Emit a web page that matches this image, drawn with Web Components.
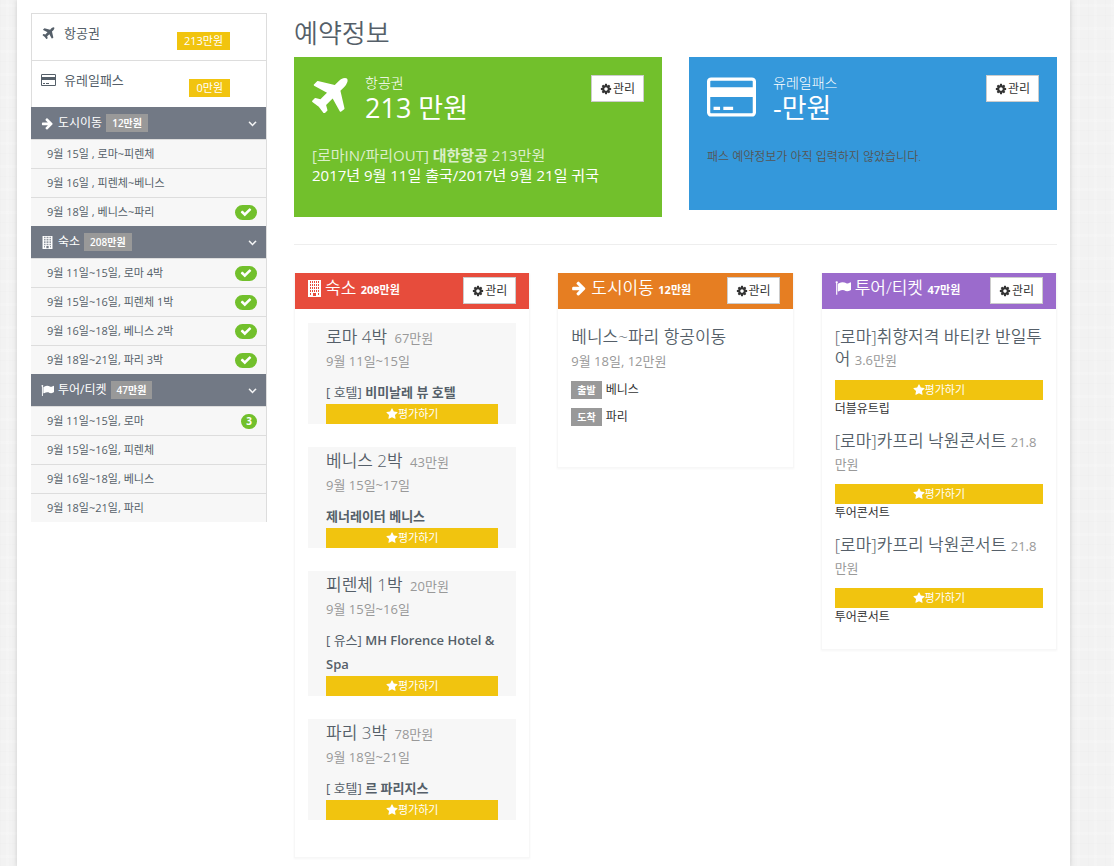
<!DOCTYPE html>
<html lang="ko">
<head>
<meta charset="utf-8">
<meta name="viewport" content="width=device-width, initial-scale=1">
<title>예약정보</title>
<style>
  :root {
    --ink: #555f69;
    --muted: #999;
    --green: #72c02c;
    --blue: #3498db;
    --red: #e74c3c;
    --orange: #e67e22;
    --purple: #9b6bcc;
    --yellow: #f1c40f;
    --slate: #727985;
    --line: #ddd;
  }

  body {
    margin: 0;
    font-family: "Open Sans", "Noto Sans CJK KR", sans-serif;
    font-size: 12px;
    line-height: 20px;
    color: var(--ink);
    background-color: #f2f2f2;
    background-image:
      repeating-linear-gradient(90deg, rgba(0, 0, 0, .008) 0 1px, transparent 1px 6px, rgba(255, 255, 255, .15) 6px 9px, transparent 9px 17px),
      repeating-linear-gradient(0deg, rgba(0, 0, 0, .008) 0 1px, transparent 1px 9px, rgba(255, 255, 255, .15) 9px 12px, transparent 12px 23px);
  }
</style>
</head>
<body>
<booking-page></booking-page>

<script>
(function () {
  // name: [viewBox, path]
  const ICONS = {
    plane: ["190 100 1420 1420", "M1568 160q44 52 12 148t-108 172l-161 161 160 696q5 19-12 33l-128 96q-7 6-19 6-4 0-7-1-15-3-21-16l-279-508-259 259 53 194q5 17-8 31l-96 96q-9 9-23 9h-2q-15-2-24-13l-189-252-252-189q-11-7-13-23-1-13 9-25l96-97q9-9 23-9 6 0 8 1l194 53 259-259-508-279q-14-8-17-24-2-16 9-27l128-128q14-13 30-8l665 159 160-160q76-76 172-108t148 12z"],
    card: ["0 128 1920 1536", "M1760 128q66 0 113 47t47 113v1216q0 66-47 113t-113 47h-1600q-66 0-113-47t-47-113v-1216q0-66 47-113t113-47h1600zm-1600 128q-13 0-22.5 9.5t-9.5 22.5v224h1664v-224q0-13-9.5-22.5t-22.5-9.5h-1600zm1600 1280q13 0 22.5-9.5t9.5-22.5v-608h-1664v608q0 13 9.5 22.5t22.5 9.5h1600zm-1504-128v-128h256v128h-256zm384 0v-128h384v128h-384z"],
    arrow: ["0 0 1792 1792", "M1600 960q0 54-37 91l-651 651q-39 37-91 37-51 0-90-37l-75-75q-38-38-38-91t38-91l293-293h-704q-52 0-84.5-37.5t-32.5-90.5v-128q0-53 32.5-90.5t84.5-37.5h704l-293-294q-38-36-38-90t38-90l75-75q38-38 90-38 53 0 91 38l651 651q37 35 37 90z"],
    building: ["0 0 13 17", "M0 0h13v17H0zM2 1v2h1V1zM4 1v2h1V1zM6 1v2h1V1zM8 1v2h1V1zM10 1v2h1V1zM2 4v2h1V4zM4 4v2h1V4zM6 4v2h1V4zM8 4v2h1V4zM10 4v2h1V4zM2 7v2h1V7zM4 7v2h1V7zM6 7v2h1V7zM8 7v2h1V7zM10 7v2h1V7zM2 10v2h1v-2zM4 10v2h1v-2zM6 10v2h1v-2zM8 10v2h1v-2zM10 10v2h1v-2zM2 13v2h1v-2zM5 13v3h3v-3zM10 13v2h1v-2z"],
    flag: ["0 0 1792 1792", "M320 256q0 72-64 110v1266q0 13-9.5 22.5t-22.5 9.5h-64q-13 0-22.5-9.5t-9.5-22.5v-1266q-64-38-64-110 0-53 37.5-90.5t90.5-37.5 90.5 37.5 37.5 90.5zm1472 64v763q0 25-12.5 38.5t-39.5 27.5q-215 116-369 116-61 0-123.5-22t-108.5-48-115.5-48-142.5-22q-192 0-464 146-17 9-33 9-26 0-45-19t-19-45v-742q0-32 31-55 21-14 79-43 236-120 421-120 107 0 200 29t219 88q38 19 88 19 54 0 117.5-21t110-47 88-47 54.5-21q26 0 45 19t19 45z"],
    cog: ["0 0 1792 1792", "M1152 896q0-106-75-181t-181-75-181 75-75 181 75 181 181 75 181-75 75-181zm512-109v222q0 12-8 23t-20 13l-185 28q-19 54-39 91 35 50 107 138 10 12 10 25t-9 23q-27 37-99 108t-94 71q-12 0-26-9l-138-108q-44 23-91 38-16 136-29 186-7 28-36 28h-222q-14 0-24.5-8.5t-11.5-21.5l-28-184q-49-16-90-37l-141 107q-10 9-25 9-14 0-25-11-126-114-165-168-7-10-7-23 0-12 8-23 15-21 51-66.5t54-70.5q-27-50-41-99l-183-27q-13-2-21-12.5t-8-23.5v-222q0-12 8-23t19-13l186-28q14-46 39-92-40-57-107-138-10-12-10-24 0-10 9-23 26-36 98.5-107.5t94.5-71.5q13 0 26 10l138 107q44-23 91-38 16-136 29-186 7-28 36-28h222q14 0 24.5 8.5t11.5 21.5l28 184q49 16 90 37l142-107q9-9 24-9 13 0 25 10 129 119 165 170 7 8 7 22 0 12-8 23-15 21-51 66.5t-54 70.5q26 50 41 98l183 28q13 2 21 12.5t8 23.5z"],
    star: ["0 0 1792 1792", "M1728 647q0 22-26 48l-363 354 86 500q1 7 1 20 0 21-10.5 35.5t-30.5 14.5q-19 0-40-12l-449-236-449 236q-22 12-40 12-21 0-31.5-14.5t-10.5-35.5q0-6 2-20l86-500-364-354q-25-27-25-48 0-37 56-46l502-73 225-455q19-41 49-41t49 41l225 455 502 73q56 9 56 46z"],
    check: ["0 0 1792 1792", "M1671 566q0 40-28 68l-724 724-136 136q-28 28-68 28t-68-28l-136-136-362-362q-28-28-28-68t28-68l136-136q28-28 68-28t68 28l294 295 656-657q28-28 68-28t68 28l136 136q28 28 28 68z"],
    down: ["0 0 1792 1792", "M1395 736q0 13-10 23l-466 466q-10 10-23 10t-23-10l-466-466q-10-10-10-23t10-23l50-50q10-10 23-10t23 10l393 393 393-393q10-10 23-10t23 10l50 50q10 10 10 23z"]
  };

  function define(name, html) {
    const template = document.createElement("template");
    template.innerHTML = html;

    window.customElements.define(name, class extends HTMLElement {
      constructor() {
        super();
        this.attachShadow({ mode: "open" });
        this.shadowRoot.appendChild(template.content.cloneNode(true));
      }
    });
  }

  class FaIcon extends HTMLElement {
    constructor() {
      super();
      this.attachShadow({ mode: "open" });
    }

    connectedCallback() {
      const [box, path] = ICONS[this.getAttribute("name")];
      this.shadowRoot.innerHTML = `
        <style>
          :host { display: inline-block; width: 14px; height: 14px; flex: none; }
          :host([name="down"]) path { stroke: currentColor; stroke-width: 70; }
          svg { display: block; width: 100%; height: 100%; }
        </style>
        <svg viewBox="${box}" fill="currentColor" fill-rule="evenodd" aria-hidden="true"><path d="${path}"/></svg>
      `;
    }
  }
  window.customElements.define("fa-icon", FaIcon);

  define("manage-button", `
    <style>
      :host { display: block; flex: none; }
      button {
        display: flex;
        align-items: center;
        gap: 1px;
        height: 27px;
        padding: 0 8px;
        border: 1px solid #ccc;
        background: #fff;
        color: #333;
        font: inherit;
        font-size: 12px;
        font-weight: 400;
        line-height: 18px;
        cursor: pointer;
      }
      fa-icon { width: 12px; height: 12px; }
    </style>
    <button type="button"><fa-icon name="cog"></fa-icon>관리</button>
  `);

  define("rate-button", `
    <style>
      :host { display: block; }
      button {
        display: flex;
        align-items: center;
        justify-content: center;
        width: 100%;
        height: 20px;
        padding: 0;
        border: 0;
        background: var(--yellow);
        color: #fff;
        font: inherit;
        font-size: 11px;
        line-height: 20px;
        cursor: pointer;
      }
      fa-icon { width: 12px; height: 12px; }
    </style>
    <button type="button"><fa-icon name="star"></fa-icon>평가하기</button>
  `);

  // Square price tag, grey unless --tag is set
  define("price-tag", `
    <style>
      :host {
        display: inline-block;
        padding: 0 6px;
        background: var(--tag, var(--muted));
        color: #fff;
        font-size: 10px;
        font-weight: 600;
        line-height: 18px;
      }
    </style>
    <slot></slot>
  `);

  // Top level sidebar link with a price
  define("nav-item", `
    <style>
      :host { display: block; border: 1px solid var(--line); border-bottom: 0; background: #fff; }
      a {
        display: flex;
        height: 46px;
        padding: 0 36px 0 9px;
        color: inherit;
        font-size: 13px;
        text-decoration: none;
      }
      ::slotted(fa-icon) { width: 15px; height: 12px; margin-top: 13px; }
      .text { flex: 1; margin: 9px 0 0 8px; }
      price-tag { --tag: var(--yellow); align-self: flex-start; margin-top: 18px; }
      .price { padding: 0 1px; font-size: 11px; font-weight: 400; }
    </style>
    <a href="#"><slot name="icon"></slot><span class="text"><slot></slot></span>
      <price-tag><span class="price"><slot name="price"></slot></span></price-tag></a>
  `);

  define("nav-group", `
    <style>
      :host { display: block; border-right: 1px solid var(--line); }
      button {
        display: flex;
        align-items: center;
        gap: 4px;
        width: 100%;
        height: 32px;
        padding: 0 7px 0 10px;
        border: 0;
        background: var(--slate);
        color: #fff;
        font: inherit;
        font-size: 12px;
        cursor: pointer;
      }
      .arrow { margin-left: auto; width: 13px; height: 13px; }
    </style>
    <button type="button" aria-expanded="true"><slot name="icon"></slot><slot name="title"></slot><price-tag><slot name="price"></slot></price-tag><fa-icon class="arrow" name="down"></fa-icon></button>
    <slot></slot>
  `);

  define("nav-row", `
    <style>
      :host { display: block; border-top: 1px solid var(--line); background: #f7f7f7; }
      a {
        display: flex;
        align-items: center;
        justify-content: space-between;
        height: 28px;
        padding: 0 9px 0 16px;
        color: inherit;
        font-size: 11px;
        text-decoration: none;
      }
      ::slotted([slot="badge"]) {
        display: flex;
        align-items: center;
        height: 15px;
        padding: 0 5px;
        border-radius: 8px;
        background: var(--green);
        color: #fff;
        font-size: 10px;
        font-weight: 700;
      }
    </style>
    <a href="#"><span><slot></slot></span><slot name="badge"></slot></a>
  `);

  define("service-card", `
    <style>
      :host { display: block; padding: 18px; color: #fff; background: var(--card); }
      header { display: flex; align-items: flex-start; gap: 17px; }
      .titles { flex: 1; }
      .name { display: block; font-size: 14px; font-weight: 300; line-height: 16px; }
      .price { display: block; font-size: 27px; line-height: 34px; }
      .body { margin-top: 20px; font-size: 15px; }
    </style>
    <header>
      <slot name="icon"></slot>
      <div class="titles"><span class="name"><slot name="name"></slot></span><span class="price"><slot name="price"></slot></span></div>
      <manage-button></manage-button>
    </header>
    <div class="body"><slot></slot></div>
  `);

  define("booking-panel", `
    <style>
      :host { display: block; border: 1px solid #f7f7f7; border-top: 0; box-shadow: 0 1px 2px rgba(0, 0, 0, .04); }
      header {
        display: flex;
        align-items: flex-start;
        justify-content: space-between;
        height: 32px;
        padding: 4px 13px 0;
        background: var(--panel);
        color: #fff;
      }
      h2 { display: flex; align-items: center; gap: 4px; margin: 0; font-size: 17px; font-weight: 350; line-height: 22px; }
      small { font-size: 11px; font-weight: 700; line-height: 18px; }
      .body { padding: 14px 13px var(--end, 37px); }
    </style>
    <header>
      <h2><slot name="icon"></slot><span><slot name="title"></slot> <small><slot name="price"></slot></small></span></h2>
      <manage-button></manage-button>
    </header>
    <div class="body"><slot></slot></div>
  `);

  define("stay-card", `
    <style>
      :host { display: block; padding: 2px 18px 0; background: #f7f7f7; }
      :host(:not(:last-child)) { margin-bottom: 23px; }
      h3 { margin: 0; font-size: 17px; font-weight: 350; line-height: 24px; }
      small { margin-left: 3px; font-size: 13px; font-weight: 400; line-height: 1; color: var(--muted); }
      .date { font-size: 13px; line-height: 24px; color: var(--muted); }
      .name { margin-top: 7px; font-size: 13px; line-height: 24px; }
    </style>
    <h3><slot name="title"></slot> <small><slot name="price"></slot></small></h3>
    <div class="date"><slot name="date"></slot></div>
    <div class="name"><slot></slot></div>
    <rate-button></rate-button>
  `);

  define("move-card", `
    <style>
      :host { display: block; padding-top: 2px; }
      h3 { margin: 0; font-size: 17px; font-weight: 350; line-height: 24px; }
      .date { margin-bottom: 3px; font-size: 13px; line-height: 24px; color: var(--muted); }
      .stop { display: flex; align-items: center; gap: 4px; height: 27px; color: #333; }
    </style>
    <h3><slot name="title"></slot></h3>
    <div class="date"><slot name="date"></slot></div>
    <div class="stop"><price-tag>출발</price-tag><slot name="from"></slot></div>
    <div class="stop"><price-tag>도착</price-tag><slot name="to"></slot></div>
  `);

  define("tour-card", `
    <style>
      :host { display: block; padding-top: 3px; }
      :host(:not(:first-of-type)) { margin-top: 9px; }
      h3 { margin: 0 0 10px; font-size: 17px; font-weight: 350; line-height: 22px; }
      small { font-size: 13px; font-weight: 400; line-height: 1; color: var(--muted); }
      .vendor { color: #333; line-height: 18px; font-size: 12px; }
    </style>
    <h3><slot name="title"></slot> <small><slot name="price"></slot></small></h3>
    <rate-button></rate-button>
    <div class="vendor"><slot></slot></div>
  `);

  define("booking-page", `
    <style>
      :host {
        display: grid;
        grid-template-columns: 236px minmax(0, 1fr);
        gap: 27px;
        align-items: start;
        min-height: 100vh;
        box-sizing: border-box;
        margin: 0 44px 0 17px;
        padding: 13px 13px 9px 14px;
        background: #fff;
        box-shadow: 0 0 5px #ccc;
      }
      nav, main { display: block; }
      h1 { margin: 0 0 4px; font-size: 26px; font-weight: 350; line-height: 40px; }
      b { font-weight: 600; }
      .cards, .panels { display: grid; gap: 27px; align-items: start; }
      .cards { grid-template-columns: repeat(2, minmax(0, 1fr)); }
      .panels { grid-template-columns: repeat(3, minmax(0, 1fr)); }
      hr { margin: 27px 0 28px; border: 0; border-top: 1px solid #eee; }
      .flight { --card: var(--green); padding-bottom: 32px; }
      .rail { --card: var(--blue); padding-bottom: 41px; }
      .flight .icon { width: 36px; height: 36px; margin-top: 2px; }
      .flight p, .rail p { margin: 0; }
      .soft { color: rgba(255, 255, 255, .75); }
      .rail .empty { font-size: 12px; font-weight: 350; line-height: 24px; color: #555; }
      .rail .icon { width: 49px; height: 40px; margin-top: 2px; }
      .stays { --panel: var(--red); }
      .moves { --panel: var(--orange); }
      .tours { --panel: var(--purple); --end: 23px; }
      booking-panel .building { width: 13px; height: 17px; }
      booking-panel .sign { width: 16px; height: 16px; }
      nav-group .sign { width: 13px; height: 13px; }
      .tick { width: 12px; height: 12px; }
    </style>
    <nav aria-label="예약 목록">
      <nav-item><fa-icon slot="icon" name="plane"></fa-icon>항공권<span slot="price">213만원</span></nav-item>
      <nav-item><fa-icon slot="icon" name="card"></fa-icon>유레일패스<span slot="price">0만원</span></nav-item>
      <nav-group>
        <fa-icon slot="icon" class="sign" name="arrow"></fa-icon><span slot="title">도시이동</span><span slot="price">12만원</span>
        <nav-row>9월 15일 , 로마~피렌체</nav-row>
        <nav-row>9월 16일 , 피렌체~베니스</nav-row>
        <nav-row>9월 18일 , 베니스~파리<span slot="badge"><fa-icon class="tick" name="check"></fa-icon></span></nav-row>
      </nav-group>
      <nav-group>
        <fa-icon slot="icon" class="sign" name="building"></fa-icon><span slot="title">숙소</span><span slot="price">208만원</span>
        <nav-row>9월 11일~15일, 로마 4박<span slot="badge"><fa-icon class="tick" name="check"></fa-icon></span></nav-row>
        <nav-row>9월 15일~16일, 피렌체 1박<span slot="badge"><fa-icon class="tick" name="check"></fa-icon></span></nav-row>
        <nav-row>9월 16일~18일, 베니스 2박<span slot="badge"><fa-icon class="tick" name="check"></fa-icon></span></nav-row>
        <nav-row>9월 18일~21일, 파리 3박<span slot="badge"><fa-icon class="tick" name="check"></fa-icon></span></nav-row>
      </nav-group>
      <nav-group>
        <fa-icon slot="icon" class="sign" name="flag"></fa-icon><span slot="title">투어/티켓</span><span slot="price">47만원</span>
        <nav-row>9월 11일~15일, 로마<span slot="badge">3</span></nav-row>
        <nav-row>9월 15일~16일, 피렌체</nav-row>
        <nav-row>9월 16일~18일, 베니스</nav-row>
        <nav-row>9월 18일~21일, 파리</nav-row>
      </nav-group>
    </nav>
    <main>
      <h1>예약정보</h1>
      <div class="cards">
        <service-card class="flight">
          <fa-icon slot="icon" class="icon" name="plane"></fa-icon>
          <span slot="name">항공권</span><span slot="price">213 만원</span>
          <p class="soft">[로마IN/파리OUT] <b>대한항공</b> 213만원</p>
          <p>2017년 9월 11일 출국/2017년 9월 21일 귀국</p>
        </service-card>
        <service-card class="rail">
          <fa-icon slot="icon" class="icon" name="card"></fa-icon>
          <span slot="name">유레일패스</span><span slot="price">-만원</span>
          <p class="empty">패스 예약정보가 아직 입력하지 않았습니다.</p>
        </service-card>
      </div>
      <hr>
      <div class="panels">
        <booking-panel class="stays">
          <fa-icon slot="icon" class="building" name="building"></fa-icon><span slot="title">숙소</span><span slot="price">208만원</span>
          <stay-card><span slot="title">로마 4박</span><span slot="price">67만원</span><span slot="date">9월 11일~15일</span>[ 호텔] <b>비미날레 뷰 호텔</b></stay-card>
          <stay-card><span slot="title">베니스 2박</span><span slot="price">43만원</span><span slot="date">9월 15일~17일</span><b>제너레이터 베니스</b></stay-card>
          <stay-card><span slot="title">피렌체 1박</span><span slot="price">20만원</span><span slot="date">9월 15일~16일</span>[ 유스] <b>MH Florence Hotel &amp; Spa</b></stay-card>
          <stay-card><span slot="title">파리 3박</span><span slot="price">78만원</span><span slot="date">9월 18일~21일</span>[ 호텔] <b>르 파리지스</b></stay-card>
        </booking-panel>
        <booking-panel class="moves">
          <fa-icon slot="icon" class="sign" name="arrow"></fa-icon><span slot="title">도시이동</span><span slot="price">12만원</span>
          <move-card><span slot="title">베니스~파리 항공이동</span><span slot="date">9월 18일, 12만원</span><span slot="from">베니스</span><span slot="to">파리</span></move-card>
        </booking-panel>
        <booking-panel class="tours">
          <fa-icon slot="icon" class="sign" name="flag"></fa-icon><span slot="title">투어/티켓</span><span slot="price">47만원</span>
          <tour-card><span slot="title">[로마]취향저격 바티칸 반일투어</span><span slot="price">3.6만원</span>더블유트립</tour-card>
          <tour-card><span slot="title">[로마]카프리 낙원콘서트</span><span slot="price">21.8만원</span>투어콘서트</tour-card>
          <tour-card><span slot="title">[로마]카프리 낙원콘서트</span><span slot="price">21.8만원</span>투어콘서트</tour-card>
        </booking-panel>
      </div>
    </main>
  `);
})();
</script>
</body>
</html>
